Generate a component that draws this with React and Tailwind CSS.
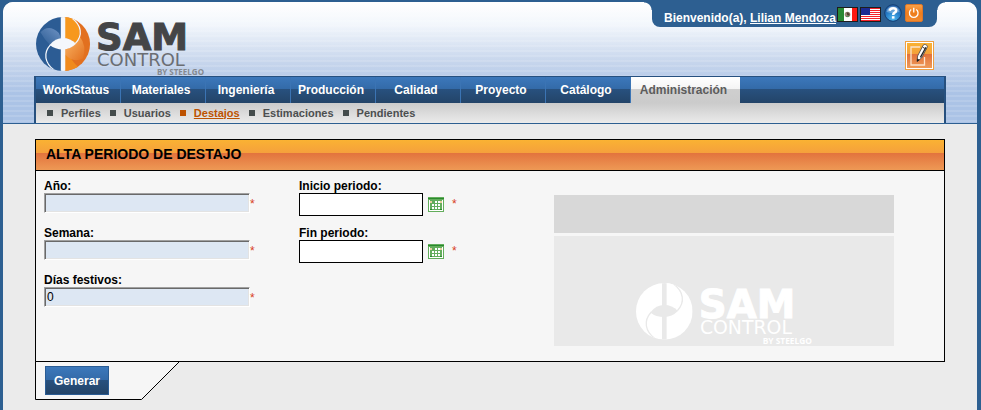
import React from "react";

const TABS = ["WorkStatus", "Materiales", "Ingeniería", "Producción", "Calidad", "Proyecto", "Catálogo"];
const SECTIONS = ["Perfiles", "Usuarios", "Destajos", "Estimaciones", "Pendientes"];

function Logo({ mono, className }) {
  const c = mono
    ? { left: "#fff", right: "#fff", outer: "#fff", gap: "#e9e9e9", name: "#fff", sub: "#fff", by: "#fff" }
    : { left: "#2c5c94", right: "#f7981d", outer: "#e2701f", gap: "#f4f7fc", name: "#444547", sub: "#6b6e73", by: "#85898f" };
  const id = mono ? "mono" : "color";
  return (
    <svg viewBox="0 0 169 60" className={`overflow-visible ${className}`} role="img" aria-label="SAM Control by Steelgo">
      <defs>
        <clipPath id={`disc-${id}`}>
          <circle cx="85" cy="85" r="85" />
        </clipPath>
        <linearGradient id="blueShine" x1="0" y1="1" x2="1" y2="0">
          <stop offset="0" stopColor="#2c5c94" />
          <stop offset="1" stopColor="#6f93c4" />
        </linearGradient>
        <linearGradient id="orangeShine" x1="0" y1="0" x2="1" y2="1">
          <stop offset="0" stopColor="#fbb766" />
          <stop offset="1" stopColor="#e2701f" />
        </linearGradient>
      </defs>
      <g transform="scale(0.318)">
        <g clipPath={`url(#disc-${id})`}>
          <rect width="85" height="170" fill={c.left} />
          <rect x="85" width="85" height="170" fill={c.outer} />
          {!mono && <path d="M14 48 Q40 20 72 50 L78 66 Q54 72 44 88 Q26 70 14 48Z" fill="url(#blueShine)" />}
          {!mono && <path d="M85 101 Q92 101 96 100 Q110 140 136 160 L85 175Z" fill="#f08a1d" />}
          {!mono && <path d="M92 101 Q112 98 124 84 Q134 70 138 62 Q160 90 148 130 Q116 146 92 118Z" fill="url(#orangeShine)" />}
          <path d="M85 0 H110 C140 25 147 56 124 83 Q108 66 85 66Z" fill={c.right} />
          <path d="M113 3 C142 25 149 56 124 83" fill="none" stroke={c.gap} strokeWidth="4" />
          <path d="M57 167 C28 145 21 114 46 87" fill="none" stroke={c.gap} strokeWidth="4" />
          <path d="M43 88 Q60 66 85 66 Q108 66 126 84 Q108 102 85 102 Q60 102 43 88Z" fill={c.gap} />
          <rect x="78" width="14" height="170" fill={c.gap} />
        </g>
      </g>
      <text x="60" y="33" fontSize="37" fontWeight="700" fontFamily="'DejaVu Sans', sans-serif" fill={c.name} stroke={c.name} strokeWidth="1">SAM</text>
      <text x="61" y="49" fontSize="18" fontFamily="'DejaVu Sans', sans-serif" fill={c.sub}>CONTROL</text>
      <text x="168" y="58" fontSize="8" fontWeight="700" textAnchor="end" fontFamily="'Open Sans', sans-serif" fill={c.by}>BY STEELGO</text>
    </svg>
  );
}

function MexicoFlag() {
  return (
    <svg width="21" height="15" viewBox="0 0 21 15" aria-hidden="true">
      <rect width="21" height="15" fill="#1d1d1d" />
      <rect x="1" y="1" width="6" height="13" fill="#2a8a35" />
      <rect x="7" y="1" width="8" height="13" fill="#fff" />
      <rect x="15" y="1" width="5" height="13" fill="#fb1a12" />
      <circle cx="10.5" cy="7.5" r="2.8" fill="#9a8a78" />
      <path d="M9.500 5.500h2v1h1v2h-2z" fill="#4b3a2c" />
      <path d="M9 9.500h3" stroke="#5d8a60" />
    </svg>
  );
}

function UsaFlag() {
  return (
    <svg width="21" height="15" viewBox="0 0 21 15" aria-hidden="true">
      <rect width="21" height="15" fill="#1d1d1d" />
      <rect x="1" y="1" width="19" height="13" fill="#fff" />
      {[1, 3, 5, 7, 9, 11, 13].map((y) => (
        <rect key={y} x="1" y={y} width="19" height="1" fill="#f5222a" />
      ))}
      <rect x="1" y="1" width="9" height="7" fill="#1c2a92" />
    </svg>
  );
}

function HelpIcon() {
  return (
    <svg width="18" height="18" viewBox="0 0 18 18" aria-hidden="true">
      <defs>
        <radialGradient id="helpFill" cx="0.5" cy="0.85" r="0.8">
          <stop offset="0" stopColor="#4fb8f0" />
          <stop offset="0.6" stopColor="#2479c4" />
          <stop offset="1" stopColor="#2a62a8" />
        </radialGradient>
      </defs>
      <circle cx="9" cy="9" r="8.3" fill="url(#helpFill)" stroke="#123f74" />
      <path d="M2.500 8 A6.600 6.600 0 0 1 15.500 8 Q9 10 2.500 8Z" fill="#9fc4e8" opacity="0.55" />
      <path d="M5.600 6.800 Q6 4.200 9.100 4.200 Q12.200 4.200 12.200 6.600 Q12.200 8 10.400 8.900 Q9.200 9.600 9.200 11" fill="none" stroke="#fff" strokeWidth="2.500" />
      <rect x="7.900" y="12.200" width="2.600" height="2.400" fill="#fff" />
    </svg>
  );
}

function PowerIcon() {
  return (
    <svg width="18" height="18" viewBox="0 0 18 18" aria-hidden="true">
      <defs>
        <linearGradient id="powerFill" x1="0" y1="0" x2="0" y2="1">
          <stop offset="0" stopColor="#f9a24a" />
          <stop offset="0.5" stopColor="#ee7d1c" />
          <stop offset="1" stopColor="#f08a30" />
        </linearGradient>
      </defs>
      <rect x="0.5" y="0.5" width="17" height="17" rx="1.5" fill="url(#powerFill)" stroke="#d9762a" />
      <path d="M6.200 5.600 A4.300 4.300 0 1 0 11.300 5.600" fill="none" stroke="#fff" strokeWidth="1.300" />
      <path d="M8.750 3.800v4.700" stroke="#fff" strokeWidth="1.300" />
    </svg>
  );
}

function EditIcon() {
  return (
    <svg width="29" height="29" viewBox="0 0 29 29" aria-hidden="true">
      <defs>
        <linearGradient id="editFill" x1="0" y1="0" x2="0" y2="1">
          <stop offset="0" stopColor="#f9b233" />
          <stop offset="0.44" stopColor="#f4a03a" />
          <stop offset="0.45" stopColor="#e2723a" />
          <stop offset="1" stopColor="#ee9a58" />
        </linearGradient>
      </defs>
      <rect x="0.5" y="0.5" width="28" height="28" fill="#fff" stroke="#f0a040" />
      <rect x="2" y="2" width="25" height="25" fill="url(#editFill)" />
      <path d="M15 6H6v18h13.500V16" fill="none" stroke="#fbe3cc" strokeWidth="1.300" />
      <path d="M12 20.500l0.600-5.500L18.200 4.200 Q19 3 20.500 3.600 L21.800 4.300 Q22.800 5 22.200 6.300 L16.500 17z" fill="#fff" stroke="#444" strokeWidth="0.800" />
      <path d="M12 20.800l0.300-3.200 2.300 1.300z" fill="#111" />
      <path d="M21 6.200L15.400 16.400" stroke="#222" strokeWidth="1.300" />
      <path d="M17.600 6.200l3.600 2" stroke="#333" strokeWidth="1" />
    </svg>
  );
}

function CalendarIcon() {
  return (
    <svg width="16" height="15" viewBox="0 0 16 15" shapeRendering="crispEdges" aria-hidden="true">
      <rect width="16" height="15" fill="#63ad5c" />
      <rect y="1" width="16" height="1" fill="#2a8a2c" />
      <rect x="1" y="3" width="14" height="11" fill="#fff" />
      <rect x="2" y="3" width="12" height="10" fill="#63ad5c" />
      <rect x="2" y="4" width="2" height="2" fill="#e6cfa0" />
      <rect x="12" y="4" width="2" height="2" fill="#e6cfa0" />
      {[7, 10].map((x) => <rect key={x} x={x} y="4" width="2" height="2" fill="#fff" />)}
      {[7, 10].map((y) => [4, 7, 10].map((x) => <rect key={`${x}-${y}`} x={x} y={y} width="2" height="2" fill="#fff" />))}
      <rect x="2" y="12" width="2" height="1" fill="#2a8a2c" />
      <rect x="12" y="12" width="2" height="1" fill="#2a8a2c" />
    </svg>
  );
}

function Required() {
  return <span className="pt-[3px] leading-4 text-[#d8401c]">*</span>;
}

function TextField({ id, label, value }) {
  return (
    <div className="h-[47px]">
      <label htmlFor={id} className="block h-[15px] leading-4 font-bold">{label}</label>
      <div className="flex">
        <input
          id={id}
          type="text"
          defaultValue={value}
          className="h-5 w-[206px] border border-t-[#a0a0a0] border-r-white border-b-white border-l-[#a0a0a0] bg-[#dde7f3] px-0.5 shadow-[inset_1px_1px_0_#696969,inset_-1px_-1px_0_#e3e3e3] outline-none"
        />
        <Required />
      </div>
    </div>
  );
}

function DateField({ id, label }) {
  return (
    <div className="h-[47px]">
      <label htmlFor={id} className="block h-[15px] leading-4 font-bold">{label}</label>
      <div className="flex">
        <input id={id} type="text" className="h-[23px] w-[124px] border border-black bg-white px-1 outline-none" />
        <button type="button" aria-label="Abrir calendario" className="mt-1 mr-2 ml-[5px] h-[15px]">
          <CalendarIcon />
        </button>
        <Required />
      </div>
    </div>
  );
}

export default function App() {
  return (
    <div className="min-h-screen bg-[#2d5f91] pt-0.5 pr-1 pl-[3px] font-['Liberation_Sans',Arial,sans-serif] text-xs text-black">
      <div className="flex min-h-[calc(100vh-2px)] flex-col rounded-t-[10px] bg-[#ebebeb]">
        <header className="rounded-t-[10px] border-b border-[#2d5f91] bg-[repeating-linear-gradient(to_bottom,#ffffff00_0px,#ffffff00_3px,#ffffff20_3px,#ffffff20_5px),linear-gradient(to_bottom,#ffffff_0%,#f3f7fc_18%,#c6d5ec_50%,#abc3e6_75%,#abc3e6_100%)]">
          <div className="flex h-[74px] items-start justify-between pl-[33px]">
            <Logo className="mt-[15px] h-[60px] w-[169px]" />
            <div className="flex flex-col items-end">
              <div className="relative mr-10 flex h-[25px] w-[285px] rounded-b-[8px] bg-[#2d5f91] pl-3 before:absolute before:top-0 before:-left-2 before:h-2 before:w-2 before:bg-[radial-gradient(circle_at_0_100%,transparent_7px,#2d5f91_8px)] after:absolute after:top-0 after:-right-2 after:h-2 after:w-2 after:bg-[radial-gradient(circle_at_100%_100%,transparent_7px,#2d5f91_8px)]">
                <p className="mr-px pt-2 leading-4 font-bold whitespace-nowrap text-white">
                  Bienvenido(a), <a href="#perfil" className="underline">Lilian Mendoza</a>
                </p>
                <a href="#es" aria-label="Español" className="mt-[5px] mr-0.5"><MexicoFlag /></a>
                <a href="#en" aria-label="English" className="mt-[5px] mr-[3px]"><UsaFlag /></a>
                <a href="#ayuda" aria-label="Ayuda" className="mt-0.5 mr-[3px]"><HelpIcon /></a>
                <a href="#salir" aria-label="Salir" className="mt-0.5"><PowerIcon /></a>
              </div>
              <button type="button" aria-label="Editar" className="mt-3.5 mr-[43px]"><EditIcon /></button>
            </div>
          </div>
          <div className="mr-[31px] ml-[31px] border-x-2 border-t border-[#26507f]">
            <nav className="flex h-[26px] bg-[linear-gradient(to_bottom,#3c78bb_0px,#336aa8_12px,#28517f_12px,#234468_26px)] font-bold">
              {TABS.map((t) => (
                <a key={t} href={`#${t}`} className="flex w-[85px] items-center justify-center border-r border-[#3b74b4] pr-1 text-white">{t}</a>
              ))}
              <a href="#admin" aria-current="page" className="flex w-[109px] items-center justify-center bg-[linear-gradient(to_bottom,#ffffff_0px,#f4f4f4_12px,#cfcfcf_12px,#cbcbcb_26px)] pr-1 text-[#5c5c5c]">Administración</a>
            </nav>
            <nav className="flex h-5 items-center gap-[9px] bg-linear-to-b from-[#cbcbcb] to-[#ebebeb] pl-[11px] text-[11px] font-bold text-[#4c4f50]">
              {SECTIONS.map((s) => {
                const active = s === "Destajos";
                return (
                  <span key={s} className="flex items-center gap-2">
                    <span className={active ? "h-1.5 w-1.5 bg-[#bd5200]" : "h-1.5 w-1.5 bg-[#444c4c]"} />
                    <a href={`#${s}`} className={active ? "text-[#bd5200] underline" : ""}>{s}</a>
                  </span>
                );
              })}
            </nav>
          </div>
        </header>

        <main className="mx-8 mt-[15px]">
          <form onSubmit={(e) => e.preventDefault()}>
            <section className="border border-black bg-[#f6f6f6]">
              <h1 className="h-[31px] border-b border-black bg-[linear-gradient(to_bottom,#fab233_0px,#f5a03c_13px,#e2733d_13px,#ee9955_30px)] pl-2.5 text-sm leading-[29px] font-bold">
                ALTA PERIODO DE DESTAJO
              </h1>
              <div className="flex pt-[7px] pb-[15px] pl-2">
                <div className="w-[255px]">
                  <TextField id="anio" label="Año:" />
                  <TextField id="semana" label="Semana:" />
                  <TextField id="festivos" label="Días festivos:" value="0" />
                </div>
                <div className="w-[255px]">
                  <DateField id="inicio" label="Inicio periodo:" />
                  <DateField id="fin" label="Fin periodo:" />
                </div>
                <aside className="flex w-[340px] flex-col gap-[3px] pt-[17px]">
                  <div className="h-[38px] bg-[#d8d8d8]" />
                  <div className="flex h-[110px] items-end bg-[#e9e9e9] pl-[82px]">
                    <Logo mono className="h-[63px] w-[177px]" />
                  </div>
                </aside>
              </div>
            </section>
            <div className="relative -mt-px h-[39px] w-[145px]">
              <svg className="absolute inset-0" width="145" height="39" viewBox="0 0 145 39" aria-hidden="true">
                <path d="M0.500 0.500V38.500H106.500L144.500 0.500Z" fill="#f6f6f6" stroke="#000" />
              </svg>
              <div className="relative pt-[5px] pl-2.5">
                <button
                  type="submit"
                  className="h-[29px] w-16 border border-[#2a5c94] bg-[linear-gradient(to_bottom,#3c78bb_0px,#336aa8_13px,#28517f_13px,#234468_27px)] font-bold text-white"
                >
                  Generar
                </button>
              </div>
            </div>
          </form>
        </main>
      </div>
    </div>
  );
}
